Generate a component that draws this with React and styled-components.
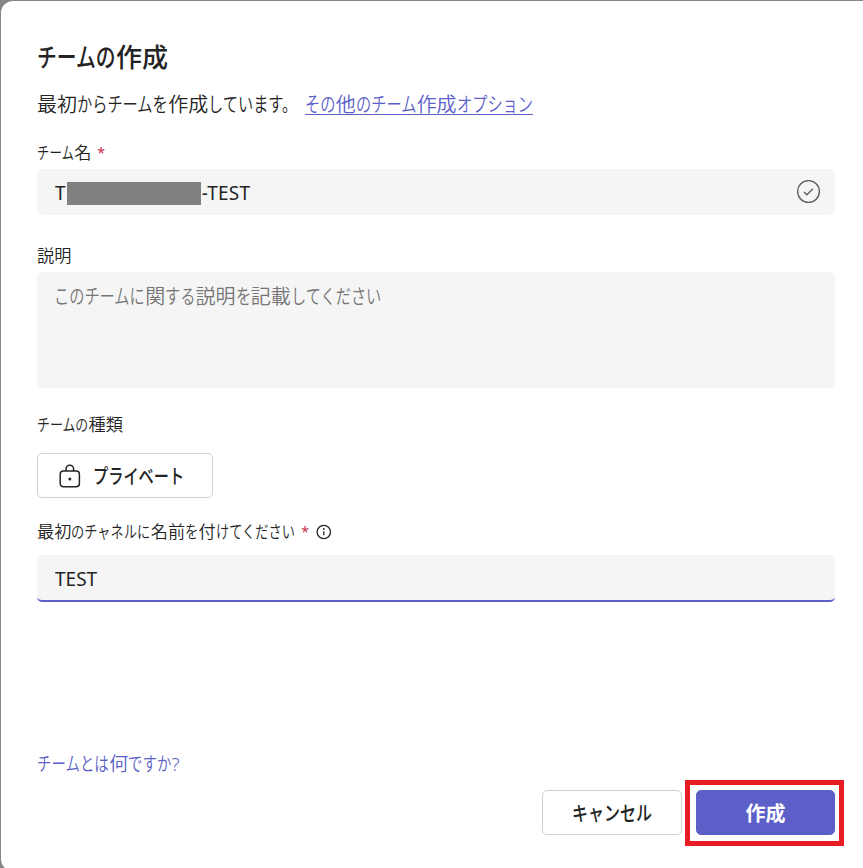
import React, {useState} from 'react'
import styled, {createGlobalStyle} from "styled-components";

// UI style kana: narrower than the kanji beside them
const KANA_WIDTH = 0.76;

export default function App() {

    const [channel, setChannel] = useState("TEST");

  return (
    <>
      <GlobalStyle />
      <Backdrop>
        <Dialog>
            <Title><Japanese text="チームの作成" /></Title>
            <Intro>
                <Japanese text="最初からチームを作成しています。" />
                <IntroLink href="#"><Japanese text="その他のチーム作成オプション" /></IntroLink>
            </Intro>

            <Label $top="24px">
                <Japanese text="チーム名" width={0.72} />
                <Required>*</Required>
            </Label>
            <NameField>
                <NameValue>T<Redacted />-TEST</NameValue>
                <CheckIcon />
            </NameField>

            <Label $top="31px"><Japanese text="説明" /></Label>
            <Description>
                <Japanese text="このチームに関する説明を記載してください" />
            </Description>

            <Label $top="27px"><Japanese text="チームの種類" width={0.75} /></Label>
            <PrivacyButton>
                <LockIcon />
                <Japanese text="プライベート" />
            </PrivacyButton>

            <Label $top="24px">
                <Japanese text="最初のチャネルに名前を付けてください" width={0.77} />
                <Required>*</Required>
                <InfoIcon />
            </Label>
            <ChannelInput
                value={channel}
                onChange={(e) => setChannel(e.target.value)}
            />

            <HelpLink href="#"><Japanese text="チームとは何ですか" />?</HelpLink>
            <Actions>
                <Button><Japanese text="キャンセル" width={0.8} /></Button>
                <Highlight>
                    <Button $primary>作成</Button>
                </Highlight>
            </Actions>
        </Dialog>
      </Backdrop>
    </>
  )
};

function Japanese({text, width = KANA_WIDTH}) {
    const runs = text.match(/[ぁ-ヿ。]+|[^ぁ-ヿ。]+/g);
    return (
        <Line>
            {
                runs.map((run, index) => (
                    /[ぁ-ヿ。]/.test(run)
                        ? <Kana key={index} $count={run.length} $width={width}>{run}</Kana>
                        : <span key={index}>{run}</span>
                ))
            }
        </Line>
    )
}

function CheckIcon() {
    return (
        <svg width="24" height="24" viewBox="0 0 24 24" fill="none" stroke="#616161" strokeWidth="1.4">
            <circle cx="11.5" cy="11.5" r="10.9" />
            <path d="M7 11.9l2.9 2.8 6-6" />
        </svg>
    )
}

function LockIcon() {
    return (
        <svg width="22" height="24" viewBox="0 0 22 24" fill="none" stroke="#242424" strokeWidth="1.5">
            <rect x="1.2" y="7" width="19.2" height="15.8" rx="3.2" />
            <path d="M7 7V5a3.8 3.8 0 0 1 7.6 0v2" />
            <circle cx="10.8" cy="15" r="1.5" fill="#242424" stroke="none" />
        </svg>
    )
}

function InfoIcon() {
    return (
        <svg width="16" height="16" viewBox="0 0 16 16" fill="none" stroke="#242424" strokeWidth="1.3">
            <circle cx="7.8" cy="8" r="6.7" />
            <path d="M7.8 7.2v4" />
            <circle cx="7.8" cy="5" r="0.9" fill="#242424" stroke="none" />
        </svg>
    )
}

const GlobalStyle = createGlobalStyle`
    * {
        box-sizing: border-box;
    }
    body {
        margin: 0;
        overflow: hidden;
        color: #242424;
        font-family: "Noto Sans", "Noto Sans CJK JP", sans-serif;
    }
    input, button {
        font: inherit;
        color: inherit;
    }
`;

const Backdrop = styled.div`
    height: 868px;
    padding: 1px 0 0 1px;
    overflow: hidden;
    background-color: #858585;
`;

const Dialog = styled.div`
    display: flex;
    flex-direction: column;
    width: 900px;
    height: 870px;
    padding: 40px 66px 0 36px;
    border-radius: 12px;
    background-color: #ffffff;
`;

const Line = styled.span`
    display: inline-flex;
    white-space: nowrap;
`;

const Kana = styled.span`
    flex: none;
    width: ${({$count}) => $count}em;
    margin-right: ${({$count, $width}) => -$count * (1 - $width)}em;
    transform: scaleX(${({$width}) => $width});
    transform-origin: left;
`;

const Title = styled.h1`
    margin: 0;
    font-size: 26px;
    font-weight: 500;
    line-height: 32px;
`;

const Intro = styled.div`
    display: flex;
    gap: 6px;
    margin-top: 18px;
    font-size: 20px;
    font-weight: 350;
    line-height: 28px;
`;

const IntroLink = styled.a`
    height: 24px;
    border-bottom: 1px solid #5b5fc7;
    color: #5b5fc7;
    text-decoration: none;
`;

const Label = styled.div`
    display: flex;
    align-items: center;
    height: 20px;
    margin-top: ${({$top}) => $top};
    font-size: 17.2px;
    font-weight: 350;
    line-height: 20px;
    svg {
        margin-left: 7px;
    }
`;

const Required = styled.span`
    margin-left: 6px;
    color: #c4314b;
    font-size: 14px;
    font-weight: 400;
`;

const NameField = styled.div`
    display: flex;
    align-items: center;
    justify-content: space-between;
    height: 46px;
    margin-top: 6px;
    padding: 0 14px 0 18px;
    border-radius: 5px;
    background-color: #f5f5f5;
`;

const NameValue = styled.div`
    display: flex;
    align-items: center;
    padding-top: 2px;
    font-size: 19px;
    letter-spacing: 0.2px;
`;

const Redacted = styled.span`
    width: 134px;
    height: 23px;
    margin: 0 1px;
    background-color: #808080;
`;

const Description = styled.div`
    height: 116px;
    margin-top: 6px;
    padding: 11px 17px;
    border-radius: 5px;
    background-color: #f5f5f5;
    color: #757575;
    font-size: 20px;
    font-weight: 350;
    line-height: 28px;
`;

const Button = styled.button`
    display: flex;
    align-items: center;
    justify-content: center;
    width: 140px;
    height: 45px;
    padding: 0;
    border: 1px solid ${({$primary}) => $primary ? "#5b5fc7" : "#d1d1d1"};
    border-radius: 5px;
    background-color: ${({$primary}) => $primary ? "#5b5fc7" : "#ffffff"};
    color: ${({$primary}) => $primary ? "#ffffff" : "#242424"};
    font-size: 20px;
    font-weight: ${({$primary}) => $primary ? 700 : 500};
    cursor: pointer;
`;

const PrivacyButton = styled(Button)`
    justify-content: flex-start;
    gap: 12px;
    width: 176px;
    margin-top: 18px;
    padding-left: 21px;
`;

const ChannelInput = styled.input`
    width: 100%;
    height: 47px;
    margin-top: 13px;
    padding: 3px 18px 0;
    border: none;
    border-bottom: 2px solid #5b5fc7;
    border-radius: 5px;
    outline: none;
    background-color: #f5f5f5;
    font-size: 19px;
`;

const HelpLink = styled.a`
    display: flex;
    align-self: flex-start;
    margin-top: 152px;
    color: #5b5fc7;
    font-size: 19px;
    font-weight: 350;
    line-height: 20px;
    text-decoration: none;
`;

const Actions = styled.div`
    display: flex;
    justify-content: flex-end;
    gap: 14px;
    margin-top: 16px;
`;

/* red frame drawn around the button, outside its own box */
const Highlight = styled.div`
    position: relative;
    ${Button} {
        width: 139px;
    }
    &::after {
        content: "";
        position: absolute;
        inset: -10px -9px -11px -11px;
        border: 5px solid #e81c24;
        pointer-events: none;
    }
`;
